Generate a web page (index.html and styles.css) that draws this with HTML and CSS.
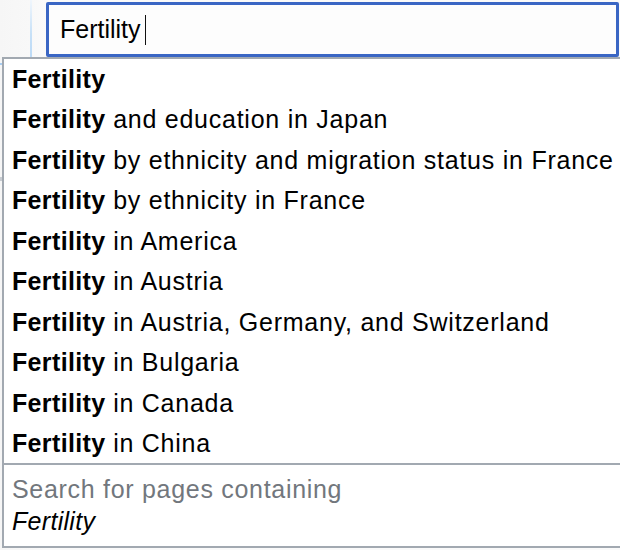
FILE: index.html
```html
<!DOCTYPE html>
<html>
<head>
<meta charset="utf-8">
<link rel="stylesheet" href="styles.css">
</head>
<body>
<div class="top">
  <div class="rail"></div>
  <div class="rail-line"></div>
  <div class="search">
    <span class="query">Fertility</span><span class="caret"></span>
  </div>
</div>
<div class="dropdown">
  <span class="tick tick-blue"></span>
  <span class="tick tick-gray"></span>
  <ul class="results">
    <li><b>Fertility</b></li>
    <li><b>Fertility</b> and education in Japan</li>
    <li><b>Fertility</b> by ethnicity and migration status in France</li>
    <li><b>Fertility</b> by ethnicity in France</li>
    <li><b>Fertility</b> in America</li>
    <li><b>Fertility</b> in Austria</li>
    <li><b>Fertility</b> in Austria, Germany, and Switzerland</li>
    <li><b>Fertility</b> in Bulgaria</li>
    <li><b>Fertility</b> in Canada</li>
    <li><b>Fertility</b> in China</li>
  </ul>
  <div class="fulltext">
    <div class="ft-label">Search for pages containing</div>
    <div class="ft-query">Fertility</div>
  </div>
</div>
</body>
</html>
```
FILE: styles.css
```css
html, body {
  margin: 0;
  padding: 0;
}
body {
  width: 620px;
  height: 550px;
  overflow: hidden;
  background: linear-gradient(to right, #f6f6f6 0, #f8f8f8 30px, #fafafa 46px);
  font-family: "Liberation Sans", Arial, sans-serif;
  color: #000;
}
.top {
  display: flex;
  height: 57px;
  align-items: flex-start;
}
.rail {
  width: 30px;
  height: 57px;
}
.rail-line {
  width: 2px;
  height: 57px;
  background: linear-gradient(to bottom, #f0f6fc 0, #c6e0f7 60%, #bcdaf6 100%);
}
.search {
  box-sizing: border-box;
  margin-left: 14px;
  margin-top: 2px;
  width: 573px;
  height: 55px;
  border: 3px solid #3a66c4;
  border-radius: 2px;
  background: #fdfdfd;
  display: flex;
  align-items: center;
  padding-left: 11px;
  font-size: 25px;
}
.caret {
  display: inline-block;
  width: 1.5px;
  height: 30px;
  background: #111;
  margin-left: 4px;
}
.dropdown {
  position: relative;
  box-sizing: border-box;
  margin-left: 2px;
  width: 640px;
  border: 2px solid #a2a9b1;
  background: #fff;
}
.tick {
  position: absolute;
  left: -4px;
  width: 2px;
}
.tick-blue {
  top: 4px;
  height: 2px;
  background: #a9cdf1;
}
.tick-gray {
  top: 118px;
  height: 4px;
  background: #c8ccd1;
}
.results {
  list-style: none;
  margin: 0;
  padding: 0;
}
.results li {
  padding-left: 8px;
  font-size: 25px;
  line-height: 40.44px;
  white-space: nowrap;
  letter-spacing: 0.75px;
}
.results li b {
  letter-spacing: 0.35px;
}
.fulltext {
  border-top: 2px solid #a2a9b1;
  padding: 8px 0 9px 8px;
  font-size: 25px;
  line-height: 32px;
  letter-spacing: 0.7px;
}
.ft-label {
  color: #72777d;
}
.ft-query {
  font-style: italic;
  letter-spacing: 0.3px;
}
```
